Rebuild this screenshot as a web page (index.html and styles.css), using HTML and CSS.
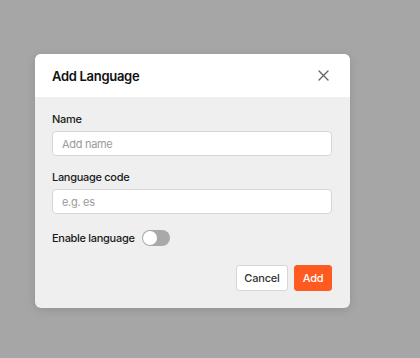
FILE: index.html
```html
<!DOCTYPE html>
<html>
<head>
<meta charset="utf-8">
<link rel="stylesheet" href="styles.css">
</head>
<body>
<div class="dialog">
  <div class="dialog-header">
    <h2 class="dialog-title">Add Language</h2>
    <button class="close-btn" aria-label="Close">
      <svg width="11" height="11" viewBox="0 0 11 11"><path d="M1 1L10 10M10 1L1 10" stroke="#666" stroke-width="1.4" stroke-linecap="round"/></svg>
    </button>
  </div>
  <div class="dialog-body">
    <div class="field">
      <label class="field-label">Name</label>
      <input class="field-input" type="text" placeholder="Add name">
    </div>
    <div class="field">
      <label class="field-label">Language code</label>
      <input class="field-input" type="text" placeholder="e.g. es">
    </div>
    <div class="toggle-row">
      <span class="field-label">Enable language</span>
      <span class="toggle"><span class="knob"></span></span>
    </div>
    <div class="actions">
      <button class="btn btn-cancel">Cancel</button>
      <button class="btn btn-add">Add</button>
    </div>
  </div>
</div>
</body>
</html>
```
FILE: styles.css
```css
* { box-sizing: border-box; }
html, body { margin: 0; padding: 0; }
body {
  background: #a6a6a6;
  height: 358px;
  font-family: Inter, "Noto Sans", sans-serif;
  letter-spacing: -0.3px;
  color: #1a1a1a;
  padding-top: 54px;
  padding-left: 35px;
}
.dialog {
  width: 315px;
  border-radius: 6px;
  overflow: hidden;
  background: #efefef;
  box-shadow: 0 2px 10px rgba(0,0,0,0.12);
}
.dialog-header {
  height: 43px;
  background: #fff;
  display: flex;
  align-items: center;
  justify-content: space-between;
  padding: 0 19px 0 17px;
}
.dialog-title {
  margin: 0;
  font-size: 13px;
  font-weight: 600;
  color: #111;
}
.close-btn {
  border: 0;
  background: none;
  padding: 2px;
  width: 15px;
  height: 15px;
  display: flex;
  align-items: center;
  justify-content: center;
}
.dialog-body {
  padding: 15px 18px 17px 17px;
  display: flex;
  flex-direction: column;
}
.field { display: flex; flex-direction: column; margin-bottom: 14px; }
.field-label {
  font-size: 11px;
  line-height: 14px;
  font-weight: 500;
  color: #1a1a1a;
  margin-bottom: 5px;
}
.field-input {
  height: 25px;
  border: 1px solid #d6d6d6;
  border-radius: 4px;
  background: #fff;
  font-family: inherit;
  letter-spacing: -0.3px;
  font-size: 11px;
  padding: 0 9px;
  outline: none;
}
.field-input::placeholder { color: #9a9a9a; }
.toggle-row {
  display: flex;
  align-items: center;
  gap: 7px;
  margin-top: 2px;
  height: 16px;
}
.toggle-row .field-label { margin-bottom: 0; }
.toggle {
  width: 28px;
  height: 16px;
  border-radius: 8px;
  background: #a9a9a9;
  position: relative;
  display: inline-block;
}
.knob {
  position: absolute;
  left: 1px;
  top: 1px;
  width: 14px;
  height: 14px;
  border-radius: 50%;
  background: #fff;
}
.actions {
  display: flex;
  justify-content: flex-end;
  gap: 6px;
  margin-top: 19px;
}
.btn {
  height: 26px;
  border-radius: 3px;
  font-family: inherit;
  letter-spacing: -0.2px;
  font-size: 11px;
  font-weight: 500;
  padding: 0;
  cursor: pointer;
}
.btn-cancel {
  width: 52px;
  background: #fff;
  border: 1px solid #d6d6d6;
  color: #333;
}
.btn-add {
  width: 38px;
  background: #ff5a1f;
  border: 1px solid #ff5a1f;
  color: #fff;
}
```
